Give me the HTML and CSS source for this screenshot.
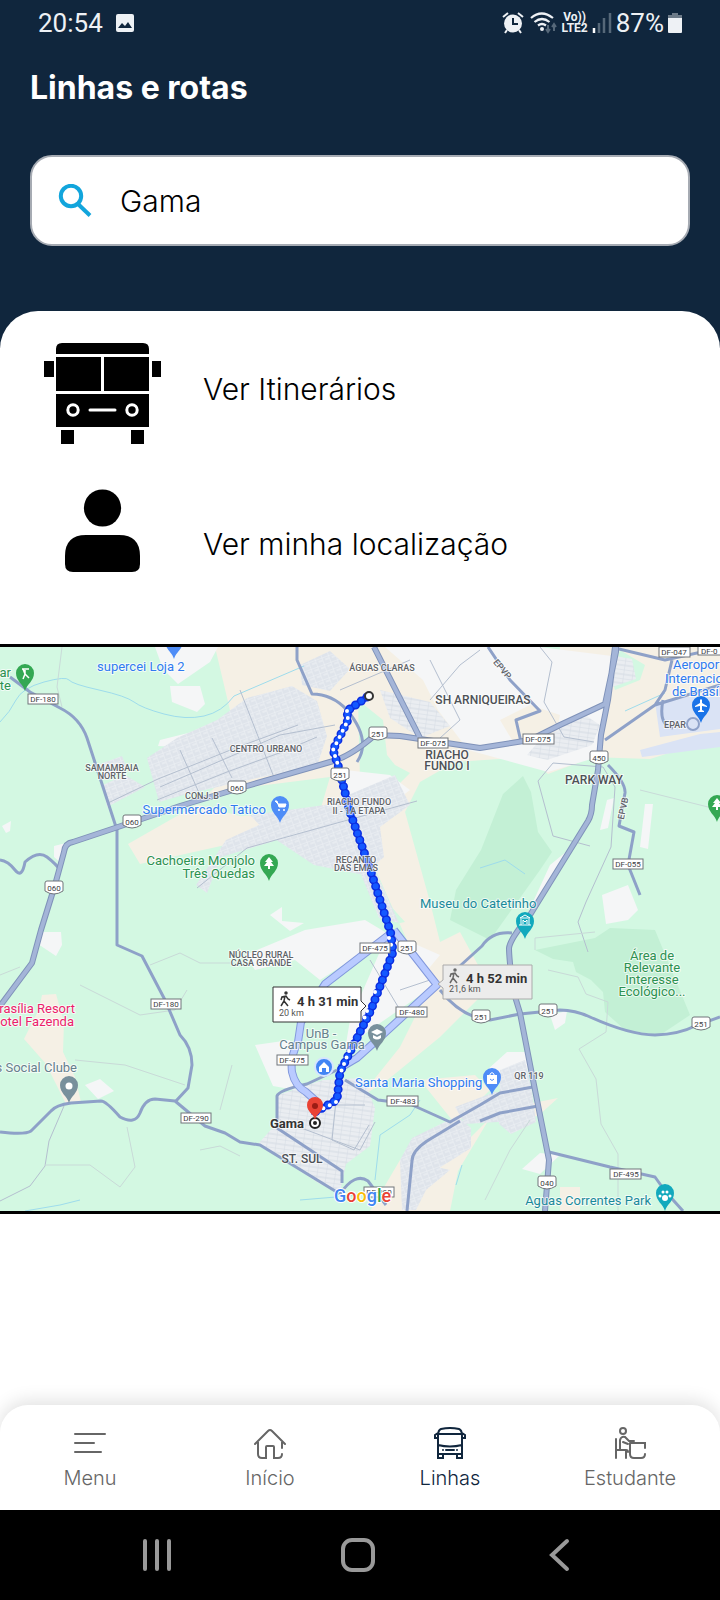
FILE: index.html
```html
<!DOCTYPE html>
<html lang="pt-BR">
<head>
<meta charset="utf-8">
<meta name="viewport" content="width=device-width, initial-scale=1">
<title>Linhas e rotas</title>
<link rel="stylesheet" href="styles.css">
</head>
<body>
<div class="app">
  <header class="header">
    <div class="status">
      <div class="status-group">
        <span class="status-text">20:54</span>
        <svg viewBox="0 0 20 20" width="20" height="20" aria-hidden="true"><rect x="1" y="1" width="18" height="18" rx="2" fill="#eef1f5"/><path d="M3 15l4-5 3 3 3-4 4 6z" fill="#10263d"/></svg>
      </div>
      <div class="status-group status-right">
        <svg viewBox="0 0 24 24" width="24" height="24" aria-hidden="true"><path d="M2 6l5-4M22 6l-5-4M6 19l-2 3M18 19l2 3" stroke="#eef1f5" stroke-width="2"/><circle cx="12" cy="12.500" r="9" fill="#eef1f5"/><path d="M12 7v6h5" fill="none" stroke="#10263d" stroke-width="2"/></svg>
        <svg viewBox="0 0 28 24" width="28" height="24" aria-hidden="true"><g fill="none" stroke="#eef1f5" stroke-width="2.200"><path d="M2 7q10.500-9 22 0M5.500 11q7.500-6 15 0M9 14.500q4-3 8 0"/></g><circle cx="13" cy="18" r="2" fill="#eef1f5"/><path d="M19 14v7m-2-3l2 3 2-3M25 20v-7m-2 3l2-3 2 3" fill="none" stroke="#566879" stroke-width="2"/></svg>
        <span class="volte"><span>Vo))</span><span>LTE2</span></span>
        <svg viewBox="0 0 20 22" width="20" height="22" aria-hidden="true"><path d="M2 16v5" stroke="#fff" stroke-width="2.500"/><path d="M7 11v10M12 6v15M18 1v20" stroke="#566879" stroke-width="2.500"/></svg>
        <span class="status-text">87%</span>
        <svg viewBox="0 0 14 22" width="14" height="22" aria-hidden="true"><path d="M4 1h6v2h4v3H0V3h4z" fill="#6c7a88"/><path d="M0 6h14v14q0 1-1 1H1q-1 0-1-1z" fill="#eef1f5"/></svg>
      </div>
    </div>
    <h1 class="title">Linhas e rotas</h1>
    <label class="search">
      <svg viewBox="0 0 34 34" width="34" height="34" aria-hidden="true"><g fill="none" stroke="#12a5dc" stroke-width="4"><circle cx="13" cy="12" r="10.200"/><path d="M20.500 20.500l11.500 11"/></g></svg>
      <input type="text" value="Gama" aria-label="Buscar linha">
    </label>
  </header>

  <main class="panel">
    <button class="option" type="button">
      <svg viewBox="0 0 203 155" width="203" height="155" aria-hidden="true">
        <path d="M56 43v-5q0-6 6-6h81q6 0 6 6v5zM56 46h45v34H56zM104 46h45v34h-45zM56 83h93v33H56zM44 50h10v16H44zM152 50h9v16h-9zM61 119h13v14H61zM131 119h13v14h-13z"/>
        <g fill="none" stroke="#fff" stroke-width="3" stroke-linecap="round"><circle cx="73" cy="99" r="5.200"/><circle cx="132" cy="99" r="5.200"/><path d="M90 99h25"/></g>
      </svg>
      <span>Ver Itinerários</span>
    </button>
    <button class="option" type="button">
      <svg viewBox="0 0 203 155" width="203" height="155" aria-hidden="true"><circle cx="102.500" cy="42" r="18.600"/><path d="M65 90q0-21 21-21h33q21 0 21 21v8q0 8-8 8H73q-8 0-8-8z"/></svg>
      <span>Ver minha localização</span>
    </button>

    <div class="map">
      <svg viewBox="0 647 720 564" role="img" aria-label="Mapa com a rota até Gama">
        <defs>
          <pattern id="streets" width="7" height="7" patternUnits="userSpaceOnUse" patternTransform="rotate(-20)"><rect width="7" height="7" fill="#dfe4eb"/><path d="M0 0h7M0 0v7M3 3h4" stroke="#f0f3f6" fill="none"/></pattern>
          <pattern id="grid" width="9" height="9" patternUnits="userSpaceOnUse" patternTransform="rotate(8)"><rect width="9" height="9" fill="#eaedf1"/><path d="M0 0h9M0 0v9M0 5h9" stroke="#d5dbe4" fill="none"/></pattern>
          <path id="pin" d="M0 0C-2-7-9-10-9-18a9 9 0 0 1 18 0C9-10 2-7 0 0z"/>
          <path id="highway" d="M0 1006l32-43 9-33 14-45 9-33q1-9 9-10l42-14 65-22 60-18 90-26q20-5 45-27l25 1 80 12 50-8 30-15 45-21 11-52v-10M374 647l46 91M615 647l-7 53-7 35-3 35-6 35q0 9-4 16l-58 94q-20 24-21 33 0 10 4 42l7 23 15 77 14 70-4 51"/>
          <path id="alternative" d="M390 934l-65 50-24 38-3 20q-8 15-6 30 3 14 14 20l9 8v15M394 930l43 55-60 55-20 18-17 10"/>
          <path id="route" d="M367 697l-20 14 1 9-15 30 5 15 12 47 21 60 20 62 2 18-22 58-31 62-3 28-22 12"/>
        </defs>
        <rect y="647" width="720" height="564" fill="#d3f8e2"/>

        <!-- forest -->
        <g fill="#c3f0d5">
          <path d="M523 776l-20 18-22 56-25 40-6 30 40 20 50-70 12-18-14-20-7-40z"/>
          <path d="M535 950l60-12 15-10 45 2 35 85-30 20-35-5-20-18-2-20-12-12-15-8-3-10-20-3z"/>
        </g>

        <!-- open land -->
        <g fill="#f5f0e5">
          <path d="M215 647h275l60 60 30 55-32 12-18-17-75 5-35 20-15 30 25 90 10 40 20-10 30 55-50 50-55 45-25 15 40-50 30-60-20-40-40-90-80-28-60 15-90 20-12-20 70-40 30-30 10-30z"/>
          <path d="M560 647h160v90l-70 22-60-2-75-20 40-30z"/>
          <path d="M42 995l14-1 8 28-1 30 12 25 6 25-15 2-20-40-22-25 15-30z"/>
          <path d="M420 1080l55-5 15 15-40 40-50 30-30 51h80l8-40 30-50 50-5 20-18-60 12-30 30zM560 1187h20v24h-20z"/>
        </g>
        <path d="M620 650l25 15-5 15-25 10-4-15zM358 700l25 20 4 35 8 10 15 8-15 15-35-8zM330 777l-80 10-70 13 60 16 80-5zM300 836l60 36 45 50-60 12-35 0-60-60z" fill="#d3f8e2"/>

        <!-- white districts -->
        <g fill="#f5f6f7">
          <path d="M385 647h155l80 10-12 45-10 55-50 15-80-22-30-40-15-30zM155 647h63l-8 15-32 22-15-15z"/>
          <path d="M170 686l30 0 5 18-8 8-25-10zM160 740l40-10 10 10-20 8-32-2zM38 932h23l1 13-6 11-18-12zM85 1085l15-6 14 12-16 8zM560 1155l-20-2-18 16 18 5zM2 826l9-5-1 10-4 2z"/>
          <path d="M602 895l26-10 10 25-10 10-22 4zM645 804h8l-5 45-8-2zM607 800l7-2-6 30-8 2zM550 865l22-18-20 38-25 30zM270 915l12-8 0 14 22 2-14 8z"/>
          <path d="M245 955l60-25 60-10 25 15-70 45-25-20-40 10zM385 940l50 45-65 45-25 20 5-30zM255 1045l35-5 5 50-22-4z"/>
          <path d="M487 1070l20-18 22 0-2 25-40 4zM550 1015l17-4-2 12-10 7zM345 770l45 5 20 15-20 15-45 0zM440 955l-50-22 25 52zM54 846l12-3-5 20-7-6z"/>
        </g>
        <path d="M500 720l30-15 30 10-5 25-40 5z" fill="#f5f0e5"/>

        <!-- built-up areas -->
        <g fill="url(#streets)">
          <path d="M147 758l30-20 40-18 30-22 45-12 25 15 10 35-10 30-60 12-70 16-28 8zM100 764l22-8 5 12-22 12zM103 785l22-10 20 12-38 20z"/>
          <path d="M196 885l30-45 55-25 50-8 10 10-70 25-50 15-14 36z"/>
          <path d="M300 665l30-14 20 18-20 22-28-6zM250 815l75-10 70-30 15 30-30 22 4 30-20 18-50-10-45-30z"/>
          <path d="M500 1070l25-10 7 32 4 30-25 12-12-10zM350 848l24 20 25 55-20-5z"/>
          <path d="M400 1160l12-22 45-22 14 12 0 20-35 22-20 40h-14zM428 1165l22 5-24 20zM455 1107l40-15 30 4-10 25-50 3z"/>
        </g>
        <g fill="url(#grid)">
          <path d="M278 1095l45-15 40-2 12 30-5 38-24 18-6 28-20-8-62-40 18-20z"/>
          <path d="M610 655l22 4 4 20-24 8zM540 740l45-25 15 10-8 20-45 15-20-5zM380 690l50 12 20 24-30 12-30-20z"/>
        </g>
        <path d="M640 750l60-16 20-2v15l-78 10zM655 702l30-5 35 0v32l-60 8z" fill="#dae3f5"/>

        <!-- streams -->
        <path d="M0 722q10-10 16-22t28-18 25-2 30 10 35 12 30 12 40 2 30-20l70-30M375 1180l5-45 30-20 10-15M462 1165l-6 20M625 711l40-18M25 1211l35-6 20-5M300 1200l60-5M480 868l25-8 20 14" fill="none" stroke="#9edcec"/>

        <!-- secondary roads -->
        <g fill="none" stroke="#b4bfcf">
          <path d="M108 803l50-24 80-32 60-22M180 750l20 45M212 738l20 40M240 690l35 90M157 800l70-28 55-20 35-15M160 787l120-52 55-10M197 888l50-40 90-25 80-22"/>
          <path d="M590 846l-37-10-15-55 15-18 50 4 12 20-4 60-25 55-8 20 10 30M540 647l12 15-8 40 20 35 30 5M430 700l30-35 20-15M430 660l30 60-20 18M340 690l70-30"/>
          <path d="M0 1201l30-15 15-20 4-25 15-35M280 1120l80 30 15-28M338 1080l-6 60 22 10 15-25M310 1105l55 0M370 960l30 50M400 990l30-10"/>
        </g>
        <path d="M62 647l-5 40 5 20M80 985l20 10 40 20 35-5 12-20M0 975l20-8M150 965l30-12 20 10 35 0M45 1165l45 0 30 22 15-20-8-40M220 1110l12-45M200 1150l20-4 20 10M535 950l0-12 60-6M548 970l30 7 8 17 22 8-2 30-27 17 17 30 5 45 17 30 0 70M510 1150l20-30M485 1200l25-50M75 1060l50 5 60 20M640 790l80 20" fill="none" stroke="#c9dad8"/>

        <!-- highways -->
        <g class="road road-thin">
          <path d="M10 677l20 15 30 16q20 10 27 30l30 92v115l25 11 23 44 15 35q12 12 12 30l-4 23-12 13"/>
          <path d="M0 860q8 1 15 10t10-8q13-12 22-5t13 13"/>
          <path d="M0 1132q25 3 31-1l20-20q5-6 20-8l30-2q5 0 19 16 15 8 20-4 5-14 15-14l20 2 30 25 20 7 15 9 20 3 80 49q15-22 28-13l18 24"/>
          <path d="M549 1152l61 15 45 10 10 14 18 20M345 1080l33 20 32 4 40 18 30-17 20-12 33-6M480 1121l20-8 38-7"/>
          <path d="M450 975l32-29q10-15 30-13M440 990q22 28 50 30l30-6 40-4q15 0 30 7 40 18 65 18 25-1 40-9l25-9"/>
          <path d="M297 647v13l15 34q20 0 35 16 25 30 10 52M488 647l22 33 30 31-24 9 5 22M605 740l50-35 65-20M663 700q-5 25 10 28M615 648l50 12 55-12M672 660l-7 30-10 15M608 765q18 18 17 28l-6 33 15 6-6 33 12 30"/>
          <path d="M277 1128v-32q2-6 30-12l30-14M407 1211l5-50q0-10 15-20l33-20M277 1128l65 43v12"/>
        </g>
        <use href="#highway" class="road-case"/>
        <use href="#highway" class="road"/>

        <!-- alternative walking routes -->
        <g fill="none" stroke-linejoin="round">
          <use href="#alternative" stroke="#8298dc" stroke-width="8"/>
          <use href="#alternative" stroke="#b9caff" stroke-width="6"/>
        </g>

        <!-- selected route -->
        <g fill="none" stroke-linecap="round" stroke-linejoin="round">
          <use href="#route" stroke="#0a32e6" stroke-width="6"/>
          <use href="#route" stroke="#0b2ee0" stroke-width="9" stroke-dasharray="0 7"/>
          <use href="#route" stroke="#1458ff" stroke-width="6" stroke-dasharray="0 7"/>
          <path d="M347 711l1 9-15 30 5 15M389 938l4 13M375 992l-2 4M367 1011l-3 8M349 1051l-8 21M336 1102l-18 9" stroke="#fff" stroke-width="4" stroke-dasharray="0 7"/>
        </g>
        <circle cx="369" cy="696" r="4" fill="#fff" stroke="#333" stroke-width="2"/>

        <!-- place labels -->
        <g class="lbl area" text-anchor="middle">
          <text x="382" y="671">ÁGUAS CLARAS</text><text x="112" y="771">SAMAMBAIA</text><text x="112" y="779">NORTE</text>
          <text x="202" y="799">CONJ. B</text><text x="266" y="752">CENTRO URBANO</text>
          <text x="359" y="805">RIACHO FUNDO</text><text x="359" y="814">II - 1A ETAPA</text>
          <text x="356" y="863">RECANTO</text><text x="356" y="871">DAS EMAS</text>
          <text x="261" y="958">NÚCLEO RURAL</text><text x="261" y="966">CASA GRANDE</text><text x="529" y="1079">QR 119</text>
          <text x="675" y="728">EPAR</text>
          <text transform="translate(500 671) rotate(50)">EPVP</text><text transform="translate(626 809) rotate(-78)">EPVB</text>
        </g>
        <g class="lbl town" text-anchor="middle">
          <text x="483" y="704">SH ARNIQUEIRAS</text><text x="447" y="759">RIACHO</text><text x="447" y="770">FUNDO I</text><text x="594" y="784">PARK WAY</text><text x="302" y="1163">ST. SUL</text>
        </g>
        <g class="lbl poi blue">
          <text x="97" y="671">supercei Loja 2</text><text x="266" y="814" text-anchor="end">Supermercado Tatico</text><text x="355" y="1087">Santa Maria Shopping</text>
          <text x="673" y="669">Aeroport</text><text x="665" y="683">Internacio</text><text x="672" y="696">de Brasíl</text>
        </g>
        <g class="lbl poi green"><text x="11" y="677" text-anchor="end">ar</text><text x="11" y="690" text-anchor="end">te</text><text x="255" y="865" text-anchor="end">Cachoeira Monjolo</text><text x="255" y="878" text-anchor="end">Três Quedas</text>
          <g text-anchor="middle"><text x="652" y="960">Área de</text><text x="652" y="972">Relevante</text><text x="652" y="984">Interesse</text><text x="652" y="996">Ecológico...</text></g></g>
        <g class="lbl poi teal"><text x="420" y="908">Museu do Catetinho</text><text x="651" y="1205" text-anchor="end">Aguas Correntes Park</text></g>
        <g class="lbl poi slate"><text x="77" y="1072" text-anchor="end">s Social Clube</text><text x="321" y="1038" text-anchor="middle">UnB -</text><text x="322" y="1049" text-anchor="middle">Campus Gama</text></g>
        <g class="lbl poi pink" text-anchor="end"><text x="75" y="1013">Brasília Resort</text><text x="74" y="1026">Hotel Fazenda</text></g>

        <!-- road numbers -->
        <g class="plate">
          <rect x="28" y="694" width="30" height="10"/><rect x="151" y="999" width="30" height="10"/><rect x="181" y="1113" width="30" height="10"/><rect x="418" y="738" width="30" height="10"/><rect x="523" y="734" width="31" height="10"/><rect x="659" y="647" width="31" height="10"/><rect x="698" y="645" width="31" height="10"/><rect x="613" y="859" width="30" height="10"/><rect x="360" y="943" width="30" height="10"/><rect x="396" y="1007" width="31" height="10"/><rect x="277" y="1055" width="31" height="10"/><rect x="387" y="1096" width="31" height="10"/><rect x="364" y="1187" width="30" height="10"/><rect x="610" y="1169" width="31" height="10"/>
          <path id="shield" d="M123 817q0-2 2-2h14q2 0 2 2v8q-9 6-18 0z"/>
          <use href="#shield" x="105" y="-34"/><use href="#shield" x="-78" y="66"/><use href="#shield" x="246" y="-88"/><use href="#shield" x="208" y="-47"/><use href="#shield" x="467" y="-64"/><use href="#shield" x="275" y="126"/><use href="#shield" x="349" y="195"/><use href="#shield" x="416" y="189"/><use href="#shield" x="569" y="202"/><use href="#shield" x="415" y="361"/>
        </g>
        <g class="num" text-anchor="middle">
          <text x="43" y="702">DF-180</text><text x="166" y="1007">DF-180</text><text x="196" y="1121">DF-290</text><text x="433" y="746">DF-075</text><text x="538" y="742">DF-075</text><text x="674" y="655">DF-047</text><text x="701" y="654" text-anchor="start">DF-0</text><text x="628" y="867">DF-055</text><text x="375" y="951">DF-475</text><text x="412" y="1015">DF-480</text><text x="292" y="1063">DF-475</text><text x="403" y="1104">DF-483</text><text x="379" y="1195">DF-290</text><text x="626" y="1177">DF-495</text>
          <text x="132" y="825">060</text><text x="237" y="791">060</text><text x="54" y="891">060</text><text x="378" y="737">251</text><text x="340" y="778">251</text><text x="599" y="761">450</text><text x="407" y="951">251</text><text x="481" y="1020">251</text><text x="548" y="1014">251</text><text x="701" y="1027">251</text><text x="547" y="1186">040</text>
        </g>

        <!-- place pins -->
        <use href="#pin" x="25" y="691" fill="#34a853"/><path d="M22 669h7M23 669l2 5-2 5m2-5l4 4M25 670v4" stroke="#fff" stroke-width="1.500" fill="none"/>
        <use href="#pin" x="174" y="659" fill="#4f8df7"/>
        <use href="#pin" x="280" y="823" fill="#4f8df7"/><path d="M275 801h2l2 6h6l1-3h-8z" stroke="#fff" fill="#fff"/><circle cx="279" cy="810" r="1" fill="#fff"/><circle cx="284" cy="810" r="1" fill="#fff"/>
        <use href="#pin" x="269" y="881" fill="#34a853"/><path id="tree" d="M269 857l4 5h-2l3 4h-4v3h-2v-3h-4l3-4h-2z" fill="#fff"/>
        <use href="#pin" x="717" y="822" fill="#34a853"/><use href="#tree" x="448" y="-59"/>
        <circle cx="693" cy="724" r="6" fill="none" stroke="#8fa2c9" stroke-width="2"/>
        <use href="#pin" x="701" y="723" fill="#1a73e8"/><path d="M701 699l1 1v3l5 3v1l-5-1v4l2 1v1h-6v-1l2-1v-4l-5 1v-1l5-3v-3z" fill="#fff"/>
        <use href="#pin" x="525" y="939" fill="#12a9bd"/><path d="M520 918l5-3 5 3zM521 925v-6m8 6v-6M523 924v-4l2 2 2-2v4M519 925h12" stroke="#fff" fill="none"/>
        <use href="#pin" x="69" y="1103" fill="#78909c"/><circle cx="69" cy="1086" r="3.500" fill="#fff"/>
        <use href="#pin" x="377" y="1051" fill="#78909c"/><path d="M371 1032l6-3 6 3-6 3zM373 1035v3q4 3 8 0v-3l-4 2z" fill="#fff"/>
        <use href="#pin" x="492" y="1095" fill="#4f8df7"/><path d="M487 1075h10v9h-10z" fill="#fff"/><path d="M490 1076v-2q2-3 4 0v2" stroke="#fff" fill="none"/><path d="M490 1079q2 3 4 0" stroke="#4f8df7" fill="none"/>
        <use href="#pin" x="665" y="1211" fill="#12a9bd"/><g fill="#fff"><circle cx="665" cy="1198" r="3"/><circle cx="660" cy="1196" r="1.500"/><circle cx="663" cy="1192" r="1.500"/><circle cx="667" cy="1192" r="1.500"/><circle cx="670" cy="1196" r="1.500"/></g>
        <circle cx="324" cy="1067" r="9" fill="#4285f4" stroke="#d6e4ff" stroke-width="2"/><path d="M319 1067l5-5 5 5v5h-3v-4h-4v4h-3z" fill="#fff"/>

        <!-- destination -->
        <circle cx="315" cy="1123" r="5" fill="#fff" stroke="#222" stroke-width="2"/><circle cx="315" cy="1123" r="2" fill="#222"/>
        <path d="M315 1120c-1-6-8-8-8-15a8 8 0 0 1 16 0c0 7-7 9-8 15z" fill="#ea4335"/><circle cx="315" cy="1106" r="3" fill="#9b1c14"/>
        <text class="lbl dest" x="304" y="1128" text-anchor="end">Gama</text>

        <!-- route times -->
        <path d="M273 987h88v14l5 5-5 5v11h-88z" fill="#fff" stroke="#333"/>
        <path d="M443 965h89v34h-89v-11l-5-4 5-4z" fill="#ececec" stroke="#aaa"/>
        <g id="walker" fill="none" stroke="#333" stroke-width="1.500"><circle cx="286" cy="993" r="1" fill="#333"/><path d="M285 996l-1 5-3 5M284 1001l4 5M281 1000l1-3 4-1 2 3 2 1"/></g>
        <use href="#walker" x="169" y="-23" opacity=".7"/>
        <g class="time"><text x="297" y="1006">4 h 31 min</text><text x="466" y="983">4 h 52 min</text></g>
        <g class="dist"><text x="279" y="1016">20 km</text><text x="449" y="992">21,6 km</text></g>
        <text class="google" x="334" y="1202"><tspan fill="#4285f4">G</tspan><tspan fill="#ea4335">o</tspan><tspan fill="#fbbc05">o</tspan><tspan fill="#4285f4">g</tspan><tspan fill="#34a853">l</tspan><tspan fill="#ea4335">e</tspan></text>
      </svg>
    </div>
  </main>

  <nav class="tabs" aria-label="Principal">
    <a class="tab" href="#menu"><svg viewBox="0 0 32 32" width="32" height="32" aria-hidden="true"><path d="M1 7h30M1 16h19M1 25h26"/></svg><span>Menu</span></a>
    <a class="tab" href="#inicio"><svg viewBox="0 0 32 32" width="32" height="32" aria-hidden="true"><path d="M1 17L14 4q2-2 4 0l13 13M4 15v12q0 4 4 4h4V20q0-1 1-1h6q1 0 1 1v11h4q4 0 4-4M28 15v6"/></svg><span>Início</span></a>
    <a class="tab active" href="#linhas" aria-current="page"><svg viewBox="0 0 32 32" width="32" height="32" aria-hidden="true"><path d="M4 27V9Q4 3 7 2q9-2 18 0 3 1 3 7v18zM4 7h24M4 18q12 3 24 0M4 6L1 8v3h3M28 6l3 2v3h-3M4 27v4h5v-4M23 27v4h5v-4M12 23h8M9 23h0M23 23h0"/></svg><span>Linhas</span></a>
    <a class="tab" href="#estudante"><svg viewBox="0 0 32 32" width="32" height="32" aria-hidden="true"><circle cx="9" cy="4" r="3"/><path d="M2 12v19M2 23h10q2 0 2 2M6 22V13q1-4 5-3l4 4h5M12 24v7M16 16h15v5M16 16v11q0 4 4 4h7q4 0 4-4M9 15l5 2"/></svg><span>Estudante</span></a>
  </nav>

  <footer class="system">
    <button type="button" aria-label="Recentes"><svg viewBox="0 0 36 36" width="36" height="36"><path d="M6 4v28M18 4v28M30 4v28"/></svg></button>
    <button type="button" aria-label="Início"><svg viewBox="0 0 36 36" width="36" height="36"><rect x="3" y="3" width="30" height="30" rx="9"/></svg></button>
    <button type="button" aria-label="Voltar"><svg viewBox="0 0 36 36" width="36" height="36"><path d="M26 4L11 18l15 14"/></svg></button>
  </footer>
</div>
</body>
</html>
```

FILE: styles.css
```css
* { box-sizing: border-box; }
body { margin: 0; background: #fff; color: #000; font-family: Inter, "Liberation Sans", sans-serif; }
button { border: 0; padding: 0; background: none; color: inherit; font: inherit; }
svg { display: block; flex: none; }

.app { display: flex; flex-direction: column; min-height: 100vh; }

.header { background: #10263d; padding: 0 30px 102px; }
.status { display: flex; justify-content: space-between; align-items: center; height: 46px; padding: 0 8px; font-family: Roboto, sans-serif; color: #eef1f5; }
.status-group { display: flex; align-items: center; gap: 12px; }
.status-right { gap: 4px; }
.status-text { font-size: 26px; line-height: 32px; }
.volte { display: flex; flex-direction: column; align-items: center; font-size: 12px; line-height: 11px; font-weight: 700; }
.title { margin: 20px 0 45px; font-size: 32px; line-height: 44px; font-weight: 700; color: #fff; }
.search { display: flex; align-items: center; gap: 28px; height: 91px; padding: 0 28px 0 26px; background: #fff; border: 2px solid #a6abb3; border-radius: 22px; }
.search input { flex: 1; min-width: 0; border: 0; padding: 0; outline: 0; background: none; font: 350 30px/40px Inter, sans-serif; color: #000; }

.panel { flex: 1; margin-top: -37px; background: #fff; border-radius: 38px 38px 0 0; }
.option { display: flex; align-items: center; width: 100%; text-align: left; font-size: 30px; line-height: 40px; font-weight: 350; }
.map { margin-top: 23px; border-top: 3px solid #000; border-bottom: 3px solid #000; }
.map svg { width: 100%; height: auto; font-family: Roboto, sans-serif; }

.road { fill: none; stroke: #a4b5d8; stroke-width: 4; stroke-linejoin: round; }
.road-case { fill: none; stroke: #7f92b9; stroke-width: 6; stroke-linejoin: round; }
.road-thin { stroke: #8ea1c8; stroke-width: 3; }
.lbl { stroke: #fff; stroke-width: 2; stroke-opacity: .7; paint-order: stroke; stroke-linejoin: round; }
.area { font-size: 9px; fill: #5f6368; font-weight: 500; }
.town { font-size: 12px; fill: #4d5156; font-weight: 500; }
.poi { font-size: 13px; }
.blue { fill: #2f7bf0; }
.green { fill: #2c9150; }
.teal { fill: #1b8a9b; }
.slate { fill: #66808d; }
.pink { fill: #ec1e6b; }
.plate { fill: #fff; stroke: #70757a; stroke-width: 1; }
.num { font-size: 8px; fill: #3c4043; }
.dest { font-size: 13px; font-weight: 700; fill: #333; }
.time { font-size: 13px; font-weight: 700; fill: #333; }
.dist { font-size: 9px; fill: #555; }
.google { font-size: 18px; font-weight: 500; stroke: #fff; stroke-width: 2; paint-order: stroke; }

.tabs { display: flex; height: 105px; padding-top: 22px; background: #fff; border-radius: 28px 28px 0 0; box-shadow: 0 -4px 18px rgba(0, 0, 0, .12); }
.tab { flex: 1; display: flex; flex-direction: column; align-items: center; gap: 7px; color: #666; text-decoration: none; font-size: 20px; line-height: 24px; font-weight: 300; }
.tab.active { color: #10263d; }
.tab svg { fill: none; stroke: currentColor; stroke-width: 2; stroke-linecap: round; }

.system { display: flex; height: 90px; padding: 0 60px 0 56px; background: #000; }
.system button { flex: 1; display: flex; align-items: center; justify-content: center; }
.system svg { fill: none; stroke: #999; stroke-width: 4; stroke-linecap: round; }
```
